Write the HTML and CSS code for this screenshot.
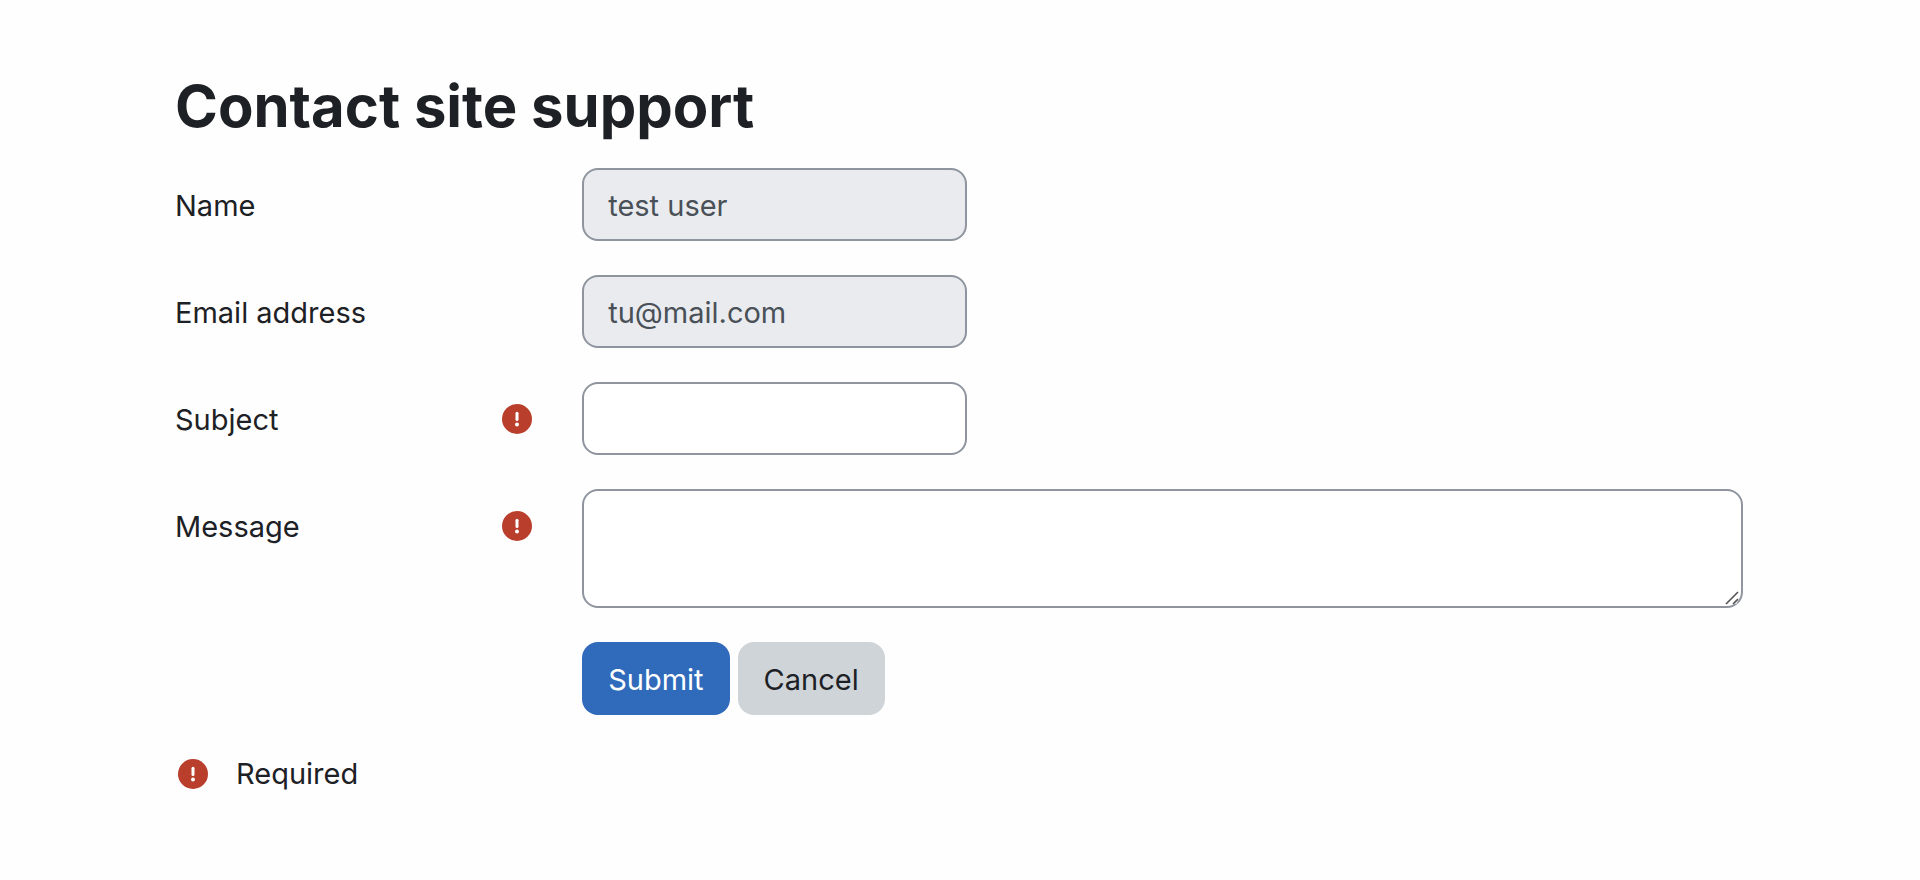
FILE: index.html
```html
<!DOCTYPE html>
<html lang="en">
<head>
    <meta charset="UTF-8">
    <meta name="viewport" content="width=device-width, initial-scale=1.0">
    <title>Contact site support</title>
    <link rel="stylesheet" href="styles.css">
</head>
<body>
    <svg class="sprite" aria-hidden="true">
        <symbol id="icon-required" viewBox="0 0 30 30">
            <circle cx="15" cy="15" r="15" fill="#b93e2c"/>
            <path d="M15 9.2v6.3" stroke="#fff" stroke-width="3" stroke-linecap="round"/>
            <circle cx="15" cy="20.6" r="2" fill="#fff"/>
        </symbol>
    </svg>
    <main class="container">
        <h1>Contact site support</h1>
        <form class="form">
            <div class="form-row">
                <div class="form-label">
                    <label for="name">Name</label>
                </div>
                <div class="form-field">
                    <input type="text" id="name" class="form-control" value="test user" disabled>
                </div>
            </div>
            <div class="form-row">
                <div class="form-label">
                    <label for="email">Email address</label>
                </div>
                <div class="form-field">
                    <input type="text" id="email" class="form-control" value="tu@mail.com" disabled>
                </div>
            </div>
            <div class="form-row">
                <div class="form-label">
                    <label for="subject">Subject</label>
                    <svg class="icon"><use href="#icon-required"/></svg>
                </div>
                <div class="form-field">
                    <input type="text" id="subject" class="form-control" required>
                </div>
            </div>
            <div class="form-row">
                <div class="form-label">
                    <label for="message">Message</label>
                    <svg class="icon"><use href="#icon-required"/></svg>
                </div>
                <div class="form-field">
                    <textarea id="message" class="form-control message" required></textarea>
                    <svg class="grip" viewBox="0 0 15 14" aria-hidden="true">
                        <path d="M8 13q3-5 5-4l-1 4z" fill="#ddd"/>
                        <path d="M1 13L13 1M8 13L13 8" fill="none" stroke="#555" stroke-width="1.6"/>
                    </svg>
                </div>
            </div>
            <div class="form-row">
                <div class="form-buttons">
                    <button type="submit" class="btn btn-primary">Submit</button>
                    <button type="button" class="btn btn-secondary">Cancel</button>
                </div>
            </div>
        </form>
        <div class="required-note">
            <svg class="icon"><use href="#icon-required"/></svg>
            <span>Required</span>
        </div>
    </main>
</body>
</html>
```

FILE: styles.css
```css
* {
    box-sizing: border-box;
}
body {
    margin: 0;
    background: #fefefe;
    color: #1d2125;
    font-family: Inter, "Liberation Sans", sans-serif;
    font-size: 29px;
    line-height: 44px;
}
.sprite {
    display: none;
}
.container {
    padding: 70px 177px 70px 175px;
}
h1 {
    margin: 0 0 26px;
    font-size: 58px;
    line-height: 72px;
    font-weight: 700;
}
.form {
    display: flex;
    flex-direction: column;
    gap: 34px;
}
.form-row {
    display: grid;
    grid-template-columns: 4fr 13fr;
    column-gap: 50px;
}
.form-label {
    display: flex;
    align-items: center;
    justify-content: space-between;
    height: 74px;
    margin-bottom: -1px;
}
.form-label label {
    padding-top: 2px;
}
.icon {
    width: 30px;
    height: 30px;
}
.form-field {
    display: flex;
    align-items: flex-start;
    position: relative;
}
.form-control {
    width: 385px;
    height: 73px;
    padding: 14px 24px 12px;
    border: 2px solid #8f959e;
    border-radius: 16px;
    background: white;
    color: #495057;
    font: inherit;
}
.form-control:disabled {
    background: #e9ebef;
}
.message {
    width: 100%;
    height: 119px;
    resize: none;
}
.grip {
    position: absolute;
    right: 3px;
    bottom: 3px;
    width: 15px;
    height: 14px;
    pointer-events: none;
}
.form-buttons {
    grid-column: 2;
    display: flex;
    gap: 8px;
}
.btn {
    height: 73px;
    padding: 2px 26px 0;
    border: none;
    border-radius: 16px;
    font: inherit;
    cursor: pointer;
}
.btn-primary {
    background: #306aba;
    color: white;
}
.btn-secondary {
    background: #ced4d8;
    color: #1d2125;
}
.required-note {
    display: flex;
    align-items: center;
    gap: 28px;
    margin-top: 37px;
    padding-left: 3px;
}
```
